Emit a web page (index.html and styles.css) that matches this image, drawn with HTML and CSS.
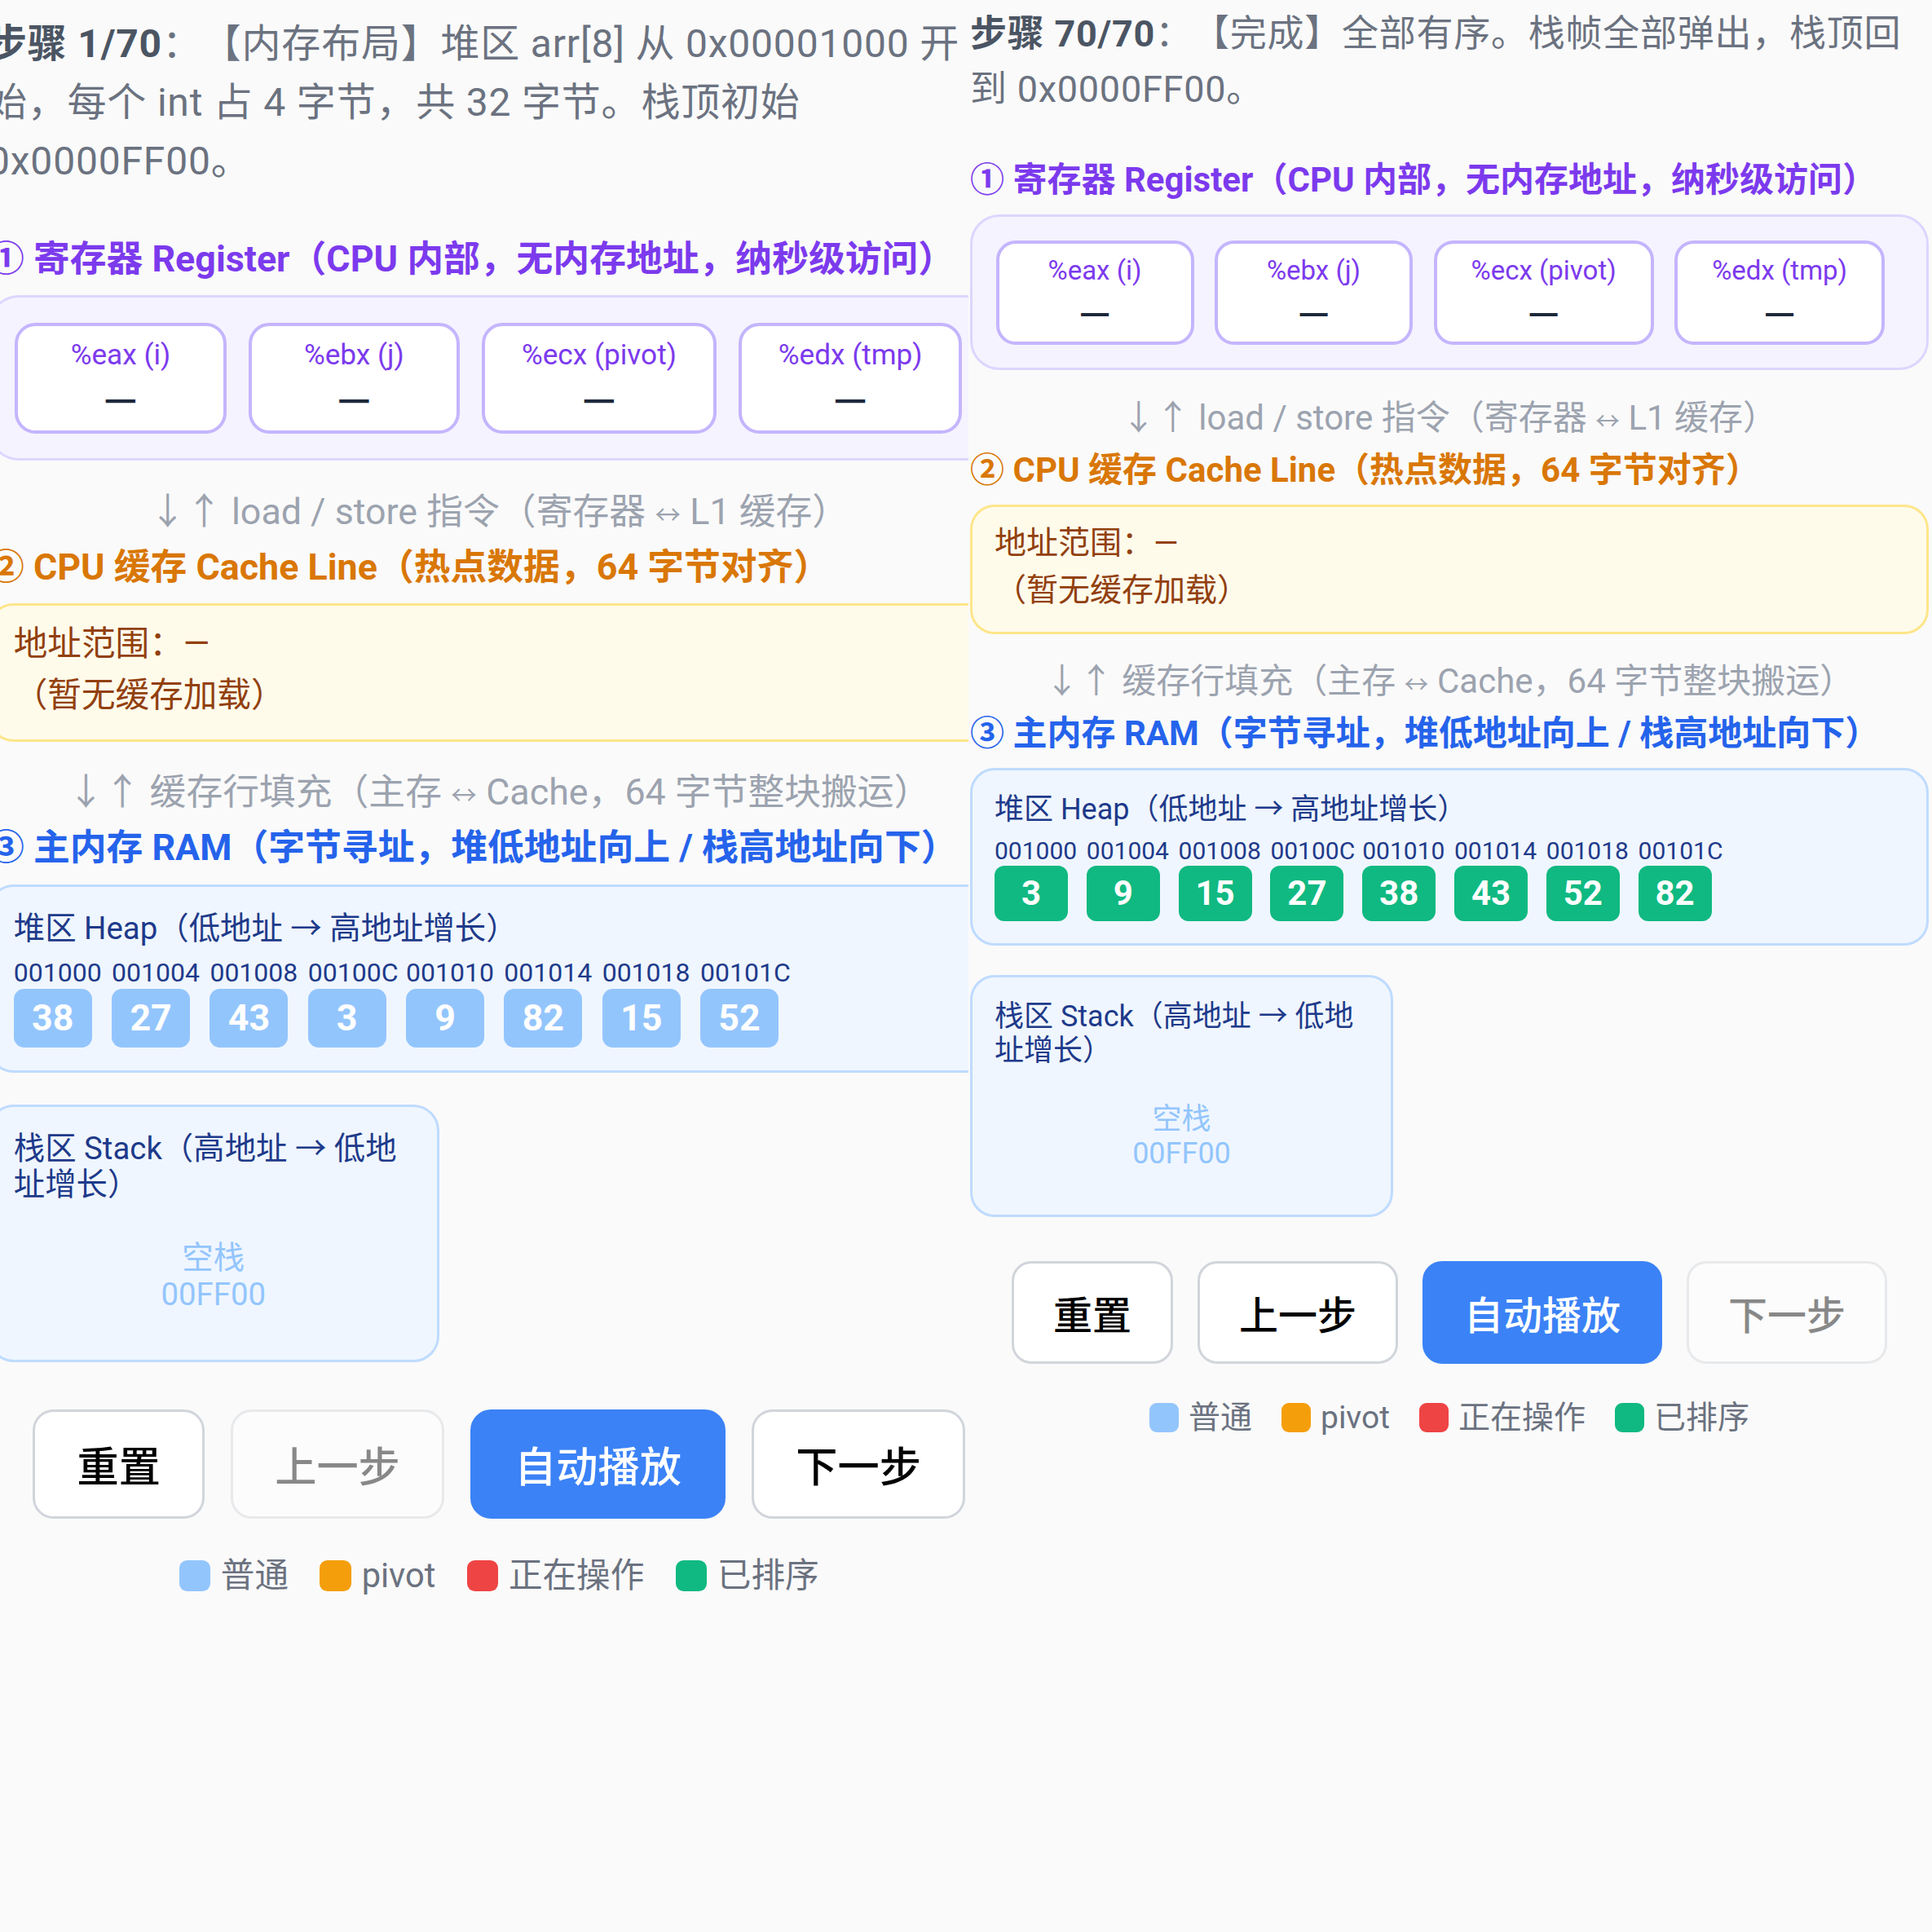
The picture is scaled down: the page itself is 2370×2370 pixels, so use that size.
FILE: index.html
```html
<!DOCTYPE html>
<html lang="zh-CN">
<head>
    <meta charset="UTF-8">
    <meta name="viewport" content="width=device-width, initial-scale=1.0">
    <title>快速排序 · 内存视角</title>
    <link rel="stylesheet" href="styles.css">
</head>
<body>
    <div class="frames">
        <!-- 第 1 步 -->
        <div class="frame frame-left">
            <div class="app">
                <p class="step"><b>步骤 1/70</b>：【内存布局】堆区 arr[8] 从 0x00001000 开始，每个 int 占 4 字节，共 32 字节。栈顶初始 0x0000FF00。</p>

                <h3 class="layer-title reg-title">① 寄存器 Register（CPU 内部，无内存地址，纳秒级访问）</h3>
                <div class="registers">
                    <div class="reg"><div class="reg-name">%eax (i)</div><div class="reg-val">—</div></div>
                    <div class="reg"><div class="reg-name">%ebx (j)</div><div class="reg-val">—</div></div>
                    <div class="reg"><div class="reg-name">%ecx (pivot)</div><div class="reg-val">—</div></div>
                    <div class="reg"><div class="reg-name">%edx (tmp)</div><div class="reg-val">—</div></div>
                </div>

                <div class="bus">↓↑ load / store 指令（寄存器 <span class="swap">↔</span> L1 缓存）</div>
                <h3 class="layer-title cache-title">② CPU 缓存 Cache Line（热点数据，64 字节对齐）</h3>
                <div class="cache">
                    <div>地址范围：—</div>
                    <div>（暂无缓存加载）</div>
                </div>

                <div class="bus">↓↑ 缓存行填充（主存 <span class="swap">↔</span> Cache，64 字节整块搬运）</div>
                <h3 class="layer-title ram-title">③ 主内存 RAM（字节寻址，堆低地址向上 / 栈高地址向下）</h3>
                <div class="heap">
                    <div class="mem-head">堆区 Heap（低地址 → 高地址增长）</div>
                    <div class="cells">
                        <div class="cell-col"><span class="addr">001000</span><span class="cell">38</span></div>
                        <div class="cell-col"><span class="addr">001004</span><span class="cell">27</span></div>
                        <div class="cell-col"><span class="addr">001008</span><span class="cell">43</span></div>
                        <div class="cell-col"><span class="addr">00100C</span><span class="cell">3</span></div>
                        <div class="cell-col"><span class="addr">001010</span><span class="cell">9</span></div>
                        <div class="cell-col"><span class="addr">001014</span><span class="cell">82</span></div>
                        <div class="cell-col"><span class="addr">001018</span><span class="cell">15</span></div>
                        <div class="cell-col"><span class="addr">00101C</span><span class="cell">52</span></div>
                    </div>
                </div>
                <div class="stack">
                    <div class="mem-head">栈区 Stack（高地址 → 低地址增长）</div>
                    <div class="stack-empty">空栈<br>00FF00</div>
                </div>

                <div class="controls">
                    <button class="btn">重置</button>
                    <button class="btn" disabled>上一步</button>
                    <button class="btn btn-primary">自动播放</button>
                    <button class="btn">下一步</button>
                </div>

                <div class="legend">
                    <span class="legend-item"><i class="swatch normal"></i>普通</span>
                    <span class="legend-item"><i class="swatch pivot"></i>pivot</span>
                    <span class="legend-item"><i class="swatch active"></i>正在操作</span>
                    <span class="legend-item"><i class="swatch sorted"></i>已排序</span>
                </div>
            </div>
        </div>

        <!-- 第 70 步 -->
        <div class="frame frame-right">
            <div class="app">
                <p class="step"><b>步骤 70/70</b>：【完成】全部有序。栈帧全部弹出，栈顶回到 0x0000FF00。</p>

                <h3 class="layer-title reg-title">① 寄存器 Register（CPU 内部，无内存地址，纳秒级访问）</h3>
                <div class="registers">
                    <div class="reg"><div class="reg-name">%eax (i)</div><div class="reg-val">—</div></div>
                    <div class="reg"><div class="reg-name">%ebx (j)</div><div class="reg-val">—</div></div>
                    <div class="reg"><div class="reg-name">%ecx (pivot)</div><div class="reg-val">—</div></div>
                    <div class="reg"><div class="reg-name">%edx (tmp)</div><div class="reg-val">—</div></div>
                </div>

                <div class="bus">↓↑ load / store 指令（寄存器 <span class="swap">↔</span> L1 缓存）</div>
                <h3 class="layer-title cache-title">② CPU 缓存 Cache Line（热点数据，64 字节对齐）</h3>
                <div class="cache">
                    <div>地址范围：—</div>
                    <div>（暂无缓存加载）</div>
                </div>

                <div class="bus">↓↑ 缓存行填充（主存 <span class="swap">↔</span> Cache，64 字节整块搬运）</div>
                <h3 class="layer-title ram-title">③ 主内存 RAM（字节寻址，堆低地址向上 / 栈高地址向下）</h3>
                <div class="heap">
                    <div class="mem-head">堆区 Heap（低地址 → 高地址增长）</div>
                    <div class="cells">
                        <div class="cell-col"><span class="addr">001000</span><span class="cell sorted">3</span></div>
                        <div class="cell-col"><span class="addr">001004</span><span class="cell sorted">9</span></div>
                        <div class="cell-col"><span class="addr">001008</span><span class="cell sorted">15</span></div>
                        <div class="cell-col"><span class="addr">00100C</span><span class="cell sorted">27</span></div>
                        <div class="cell-col"><span class="addr">001010</span><span class="cell sorted">38</span></div>
                        <div class="cell-col"><span class="addr">001014</span><span class="cell sorted">43</span></div>
                        <div class="cell-col"><span class="addr">001018</span><span class="cell sorted">52</span></div>
                        <div class="cell-col"><span class="addr">00101C</span><span class="cell sorted">82</span></div>
                    </div>
                </div>
                <div class="stack">
                    <div class="mem-head">栈区 Stack（高地址 → 低地址增长）</div>
                    <div class="stack-empty">空栈<br>00FF00</div>
                </div>

                <div class="controls">
                    <button class="btn">重置</button>
                    <button class="btn">上一步</button>
                    <button class="btn btn-primary">自动播放</button>
                    <button class="btn" disabled>下一步</button>
                </div>

                <div class="legend">
                    <span class="legend-item"><i class="swatch normal"></i>普通</span>
                    <span class="legend-item"><i class="swatch pivot"></i>pivot</span>
                    <span class="legend-item"><i class="swatch active"></i>正在操作</span>
                    <span class="legend-item"><i class="swatch sorted"></i>已排序</span>
                </div>
            </div>
        </div>
    </div>
</body>
</html>
```

FILE: styles.css
```css
* {
    box-sizing: border-box;
    margin: 0;
    padding: 0;
}

body {
    background: #fafafa;
    font-family: Roboto, "Noto Sans CJK SC", sans-serif;
    text-spacing-trim: space-all;
    overflow: hidden;
}

/* 两个截图并排：左边放大并裁切 */
.frames {
    display: flex;
    height: 2370px;
}

.frame {
    overflow: hidden;
}

.frame-left {
    width: 1188px;
    flex: none;
}

.frame-right {
    flex: 1;
}

.app {
    width: 392px;
}

.frame-left .app {
    zoom: 3.2;
    margin: 5.75px 0 0 -4.7px;
}

.frame-right .app {
    zoom: 3;
    margin: 2.75px 0 0 0.67px;
}

/* 步骤说明 */
.step {
    font-size: 15px;
    line-height: 1.5;
    letter-spacing: 0.25px;
    color: #6b7280;
    margin-bottom: 16px;
}

.step b {
    color: #4b5563;
    font-weight: 700;
}

.layer-title {
    font-size: 14px;
    font-weight: 700;
    line-height: 20px;
    margin-bottom: 4px;
}

.reg-title { color: #7c3aed; }
.cache-title { color: #d97706; }
.ram-title { color: #2563eb; }

.bus {
    margin-top: 9.5px;
    text-align: center;
    font-size: 14px;
    line-height: 20px;
    color: #9ca3af;
}

.bus .swap {
    font-size: 10px;
}

/* 寄存器 */
.registers {
    display: flex;
    gap: 8.5px;
    padding: 9.5px;
    background: #f5f3ff;
    border: 1px solid #ddd6fe;
    border-radius: 12px;
}

.reg {
    min-width: 81px;
    padding: 4px 14px;
    background: #fff;
    border: 1.5px solid #c4b5fd;
    border-radius: 8px;
    text-align: center;
}

.reg-name {
    font-size: 11px;
    line-height: 14px;
    color: #7c3aed;
}

.reg-val {
    font-family: "Noto Sans CJK SC", sans-serif;
    font-size: 14px;
    font-weight: 700;
    line-height: 18px;
    color: #1e293b;
}

/* 缓存 */
.cache {
    padding: 5px 9px 7px;
    background: #fffbeb;
    border: 1px solid #fde68a;
    border-radius: 10px;
    font-size: 13px;
    line-height: 19.5px;
    color: #92400e;
}

/* 主存 */
.heap,
.stack {
    padding: 9px;
    background: #eff6ff;
    border: 1px solid #bfdbfe;
    border-radius: 10px;
}

.stack {
    width: 173px;
    margin-top: 12px;
}

.mem-head {
    font-size: 12px;
    line-height: 14px;
    color: #1e3a8a;
}

.cells {
    display: flex;
    gap: 4px;
    margin-top: 4px;
}

.cell-col {
    width: 33.6px;
    display: flex;
    flex-direction: column;
    align-items: flex-start;
}

.addr {
    font-size: 10px;
    line-height: 12px;
    color: #1e3a8a;
    white-space: nowrap;
}

.cell {
    width: 30px;
    height: 22.5px;
    line-height: 22.5px;
    border-radius: 4px;
    background: #93c5fd;
    color: #fff;
    font-size: 14px;
    font-weight: 700;
    text-align: center;
}

.cell.sorted {
    background: #10b981;
}

.stack-empty {
    padding: 14px 0 9px;
    text-align: center;
    font-size: 12px;
    line-height: 14px;
    color: #93c5fd;
}

/* 控制按钮 */
.controls {
    display: flex;
    justify-content: center;
    gap: 10px;
    margin-top: 18px;
}

.btn {
    padding: 10px 16px;
    background: #fff;
    border: 1px solid #d1d5db;
    border-radius: 8px;
    font-family: "Noto Sans CJK SC", sans-serif;
    font-size: 16px;
    font-weight: 500;
    line-height: 20px;
    color: #000;
    cursor: pointer;
}

.btn:disabled {
    opacity: 0.45;
    cursor: default;
}

.btn-primary {
    background: #3b82f6;
    border-color: #3b82f6;
    color: #fff;
}

/* 图例 */
.legend {
    display: flex;
    justify-content: center;
    gap: 12px;
    margin-top: 13px;
    font-size: 13px;
    line-height: 18px;
    color: #6b7280;
}

.legend-item {
    display: flex;
    align-items: center;
    gap: 4px;
}

.swatch {
    width: 12px;
    height: 12px;
    border-radius: 3px;
}

.swatch.normal { background: #93c5fd; }
.swatch.pivot { background: #f59e0b; }
.swatch.active { background: #ef4444; }
.swatch.sorted { background: #10b981; }
```
